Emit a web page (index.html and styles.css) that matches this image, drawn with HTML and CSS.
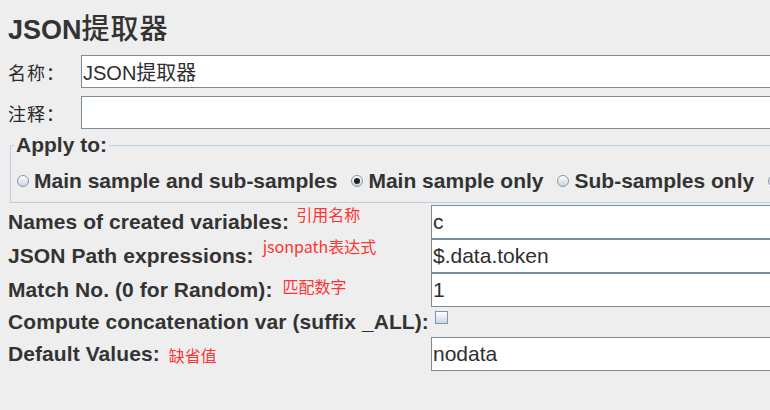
FILE: index.html
```html
<!DOCTYPE html>
<html lang="zh-CN">
<head>
<meta charset="utf-8">
<title>JSON提取器</title>
<link rel="stylesheet" href="styles.css">
</head>
<body>
<div class="page">
  <h1 class="title">JSON<span class="title-cn">提取器</span></h1>

  <div class="top-form">
    <div class="row-top">
      <div class="label-cn">名称：</div>
      <div class="field field-top">JSON提取器</div>
    </div>
    <div class="row-top row-gap">
      <div class="label-cn">注释：</div>
      <div class="field field-top"></div>
    </div>
  </div>

  <fieldset class="apply">
    <legend class="apply-legend">Apply to:</legend>
    <div class="radios">
      <label class="radio-opt"><span class="radio"></span>Main sample and sub-samples</label>
      <label class="radio-opt"><span class="radio radio-on"></span>Main sample only</label>
      <label class="radio-opt"><span class="radio"></span>Sub-samples only</label>
      <label class="radio-opt"><span class="radio"></span>JMeter Variable Name to use</label>
    </div>
  </fieldset>

  <div class="grid">
    <div class="label">Names of created variables:<span class="note note-1">引用名称</span></div>
    <div class="field field-grid">c</div>

    <div class="label">JSON Path expressions:<span class="note note-2">jsonpath表达式</span></div>
    <div class="field field-grid">$.data.token</div>

    <div class="label">Match No. (0 for Random):<span class="note note-3">匹配数字</span></div>
    <div class="field field-grid">1</div>

    <div class="label">Compute concatenation var (suffix _ALL):</div>
    <div class="check-cell"><span class="checkbox"></span></div>

    <div class="label">Default Values:<span class="note note-4">缺省值</span></div>
    <div class="field field-grid">nodata</div>
  </div>
</div>
</body>
</html>
```

FILE: styles.css
```css
html, body {
  margin: 0;
  padding: 0;
}

body {
  background: #eeeeee;
  width: 770px;
  height: 410px;
  overflow: hidden;
  color: #333333;
  font-family: "Liberation Sans", "Noto Sans CJK SC", sans-serif;
}

.page {
  width: 800px;
  padding-left: 8px;
  box-sizing: border-box;
}

.title {
  margin: 11px 0 0;
  height: 32px;
  line-height: 32px;
  font-size: 27px;
  font-weight: 700;
  white-space: nowrap;
}

.title-cn {
  font-family: "Noto Sans CJK SC", sans-serif;
  font-weight: 500;
  font-size: 28px;
  letter-spacing: 1px;
}

.top-form {
  margin-top: 12px;
}

.row-top {
  display: flex;
  align-items: center;
  height: 33px;
}

.row-gap {
  margin-top: 8px;
}

.label-cn {
  width: 73px;
  flex: none;
  font-family: "Noto Sans CJK SC", sans-serif;
  font-size: 18px;
  line-height: 24px;
  letter-spacing: 1px;
  color: #2a2a2a;
}

.field {
  box-sizing: border-box;
  background: #ffffff;
  border: 1px solid #7a8a99;
  border-right: none;
  display: flex;
  align-items: center;
  padding-left: 1px;
  color: #2e2e2e;
  white-space: nowrap;
}

.field-top {
  flex: 1;
  height: 33px;
  font-size: 20px;
}

.apply {
  margin: 4px -40px 0 2px;
  padding: 0;
  border: 1px solid #b8cfe5;
  min-width: 0;
}

.apply-legend {
  margin-left: 3px;
  padding: 0 2px;
  font-size: 21px;
  font-weight: 700;
  line-height: 24px;
  height: 24px;
}

.radios {
  display: flex;
  align-items: center;
  gap: 14px;
  height: 24px;
  padding: 12px 0 9px 6px;
  white-space: nowrap;
  overflow: hidden;
}

.radio-opt {
  display: flex;
  align-items: center;
  gap: 5px;
  font-size: 21px;
  font-weight: 700;
  line-height: 24px;
}

.radio {
  position: relative;
  flex: none;
  width: 12px;
  height: 12px;
  box-sizing: border-box;
  border: 1px solid #8797a7;
  border-radius: 50%;
  background: linear-gradient(#ffffff, #c6d4e2);
}

.radio-on::after {
  content: "";
  position: absolute;
  left: 2px;
  top: 2px;
  width: 6px;
  height: 6px;
  border-radius: 50%;
  background: #222222;
}

.grid {
  margin-top: 2px;
  display: grid;
  grid-template-columns: 423px 1fr;
  grid-template-rows: 34px 34px 34px 30px 34px;
}

.label {
  display: flex;
  align-items: center;
  font-size: 21px;
  font-weight: 700;
  line-height: 24px;
  letter-spacing: 0.08px;
  white-space: nowrap;
}

.note {
  align-self: flex-start;
  font-family: "Noto Sans CJK SC", sans-serif;
  font-weight: 400;
  font-size: 16px;
  line-height: 16px;
  letter-spacing: 0;
  color: #ff3333;
}

.note-1 { margin: 1px 0 0 7px; }
.note-2 { margin: -1px 0 0 9px; }
.note-3 { margin: 5px 0 0 10px; }
.note-4 { margin: 10px 0 0 9px; }

.field-grid {
  height: 34px;
  font-size: 21px;
}

.check-cell {
  padding: 4px 0 0 4px;
}

.checkbox {
  display: block;
  width: 13px;
  height: 13px;
  box-sizing: border-box;
  border: 1px solid #8394a5;
  background: linear-gradient(#ffffff, #c8d6e4);
}
```
